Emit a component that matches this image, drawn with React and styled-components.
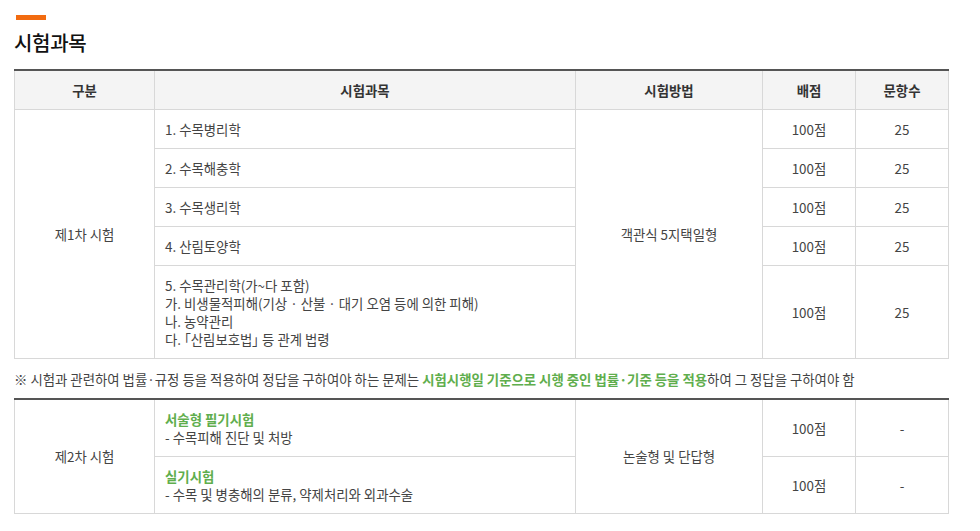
import React from "react";
import styled, { createGlobalStyle } from "styled-components";

const Global = createGlobalStyle`
  html, body { margin: 0; padding: 0; background: #fff; }
  body {
    font-family: "Noto Sans CJK KR", "Noto Sans", sans-serif;
    color: #444;
  }
`;

const Page = styled.div`
  padding: 15px 0 0 14px;
  width: 934px;
`;

const Bar = styled.div`
  width: 30px;
  height: 5px;
  margin-left: 2px;
  background: #f26b10;
`;

const Title = styled.h2`
  margin: 11px 0 14px;
  font-size: 20px;
  line-height: 24px;
  font-weight: 500;
  color: #111;
  letter-spacing: -0.3px;
`;

const Table = styled.table`
  width: 934px;
  border-collapse: collapse;
  table-layout: fixed;
  border-top: 2px solid #555;
  font-size: 13.4px;
  line-height: 18px;
`;

const Th = styled.th`
  height: 38px;
  padding: 0;
  background: #f4f4f4;
  border: 1px solid #d8d8d8;
  border-top: none;
  font-weight: 700;
  color: #333;
  text-align: center;
  vertical-align: middle;
`;

const Td = styled.td`
  height: ${(p) => p.$h || 39}px;
  padding: ${(p) => (p.$left ? "0 10px" : "0")};
  border: 1px solid #d8d8d8;
  ${(p) => (p.$noTop ? "border-top: none;" : "")}
  text-align: ${(p) => (p.$left ? "left" : "center")};
  vertical-align: middle;
  color: #444;
  box-sizing: border-box;
`;

const Lines = styled.div`
  display: flex;
  flex-direction: column;
  padding: ${(p) => p.$pad || 10}px 0;
`;

const Line = styled.div`
  height: 18px;
  line-height: 18px;
  overflow: visible;
`;

const Green = styled.span`
  color: #5fae4d;
  font-weight: 700;
`;

const Punct = styled.span`
  font-feature-settings: "palt";
`;

const Note = styled.p`
  margin: 0;
  padding: 11px 0 10px;
  font-size: 13.4px;
  line-height: 18px;
  color: #444;
`;

const subjects = ["1. 수목병리학", "2. 수목해충학", "3. 수목생리학", "4. 산림토양학"];

function Cols() {
  return (
    <colgroup>
      <col style={{ width: 140 }} />
      <col style={{ width: 421 }} />
      <col style={{ width: 187 }} />
      <col style={{ width: 93 }} />
      <col style={{ width: 93 }} />
    </colgroup>
  );
}

export default function App() {
  return (
    <Page>
      <Global />
      <Bar />
      <Title>시험과목</Title>
      <Table>
        <Cols />
        <thead>
          <tr>
            <Th>구분</Th>
            <Th>시험과목</Th>
            <Th>시험방법</Th>
            <Th>배점</Th>
            <Th>문항수</Th>
          </tr>
        </thead>
        <tbody>
          {subjects.map((s, i) => (
            <tr key={s}>
              {i === 0 && <Td rowSpan={5}>제1차 시험</Td>}
              <Td $left>{s}</Td>
              {i === 0 && <Td rowSpan={5}>객관식 5지택일형</Td>}
              <Td>100점</Td>
              <Td>25</Td>
            </tr>
          ))}
          <tr>
            <Td $left $h={93}>
              <Lines>
                <Line>5. 수목관리학(가~다 포함)</Line>
                <Line>
                  가. 비생물적피해(기상 <Punct>·</Punct> 산불 <Punct>·</Punct> 대기 오염 등에 의한 피해)
                </Line>
                <Line>나. 농약관리</Line>
                <Line>
                  다. <Punct>「</Punct>산림보호법<Punct>」</Punct> 등 관계 법령
                </Line>
              </Lines>
            </Td>
            <Td $h={93}>100점</Td>
            <Td $h={93}>25</Td>
          </tr>
        </tbody>
      </Table>
      <Note>
        ※ 시험과 관련하여 법률<Punct>·</Punct>규정 등을 적용하여 정답을 구하여야 하는 문제는{" "}
        <Green>
          시험시행일 기준으로 시행 중인 법률<Punct>·</Punct>기준 등을 적용
        </Green>
        하여 그 정답을 구하여야 함
      </Note>
      <Table>
        <Cols />
        <tbody>
          <tr>
            <Td rowSpan={2} $noTop>제2차 시험</Td>
            <Td $left $h={57} $noTop>
              <Lines $pad={9}>
                <Line>
                  <Green>서술형 필기시험</Green>
                </Line>
                <Line>- 수목피해 진단 및 처방</Line>
              </Lines>
            </Td>
            <Td rowSpan={2} $noTop>논술형 및 단답형</Td>
            <Td $h={57} $noTop>100점</Td>
            <Td $h={57} $noTop>-</Td>
          </tr>
          <tr>
            <Td $left $h={57}>
              <Lines $pad={9}>
                <Line>
                  <Green>실기시험</Green>
                </Line>
                <Line>- 수목 및 병충해의 분류, 약제처리와 외과수술</Line>
              </Lines>
            </Td>
            <Td $h={57}>100점</Td>
            <Td $h={57}>-</Td>
          </tr>
        </tbody>
      </Table>
    </Page>
  );
}
